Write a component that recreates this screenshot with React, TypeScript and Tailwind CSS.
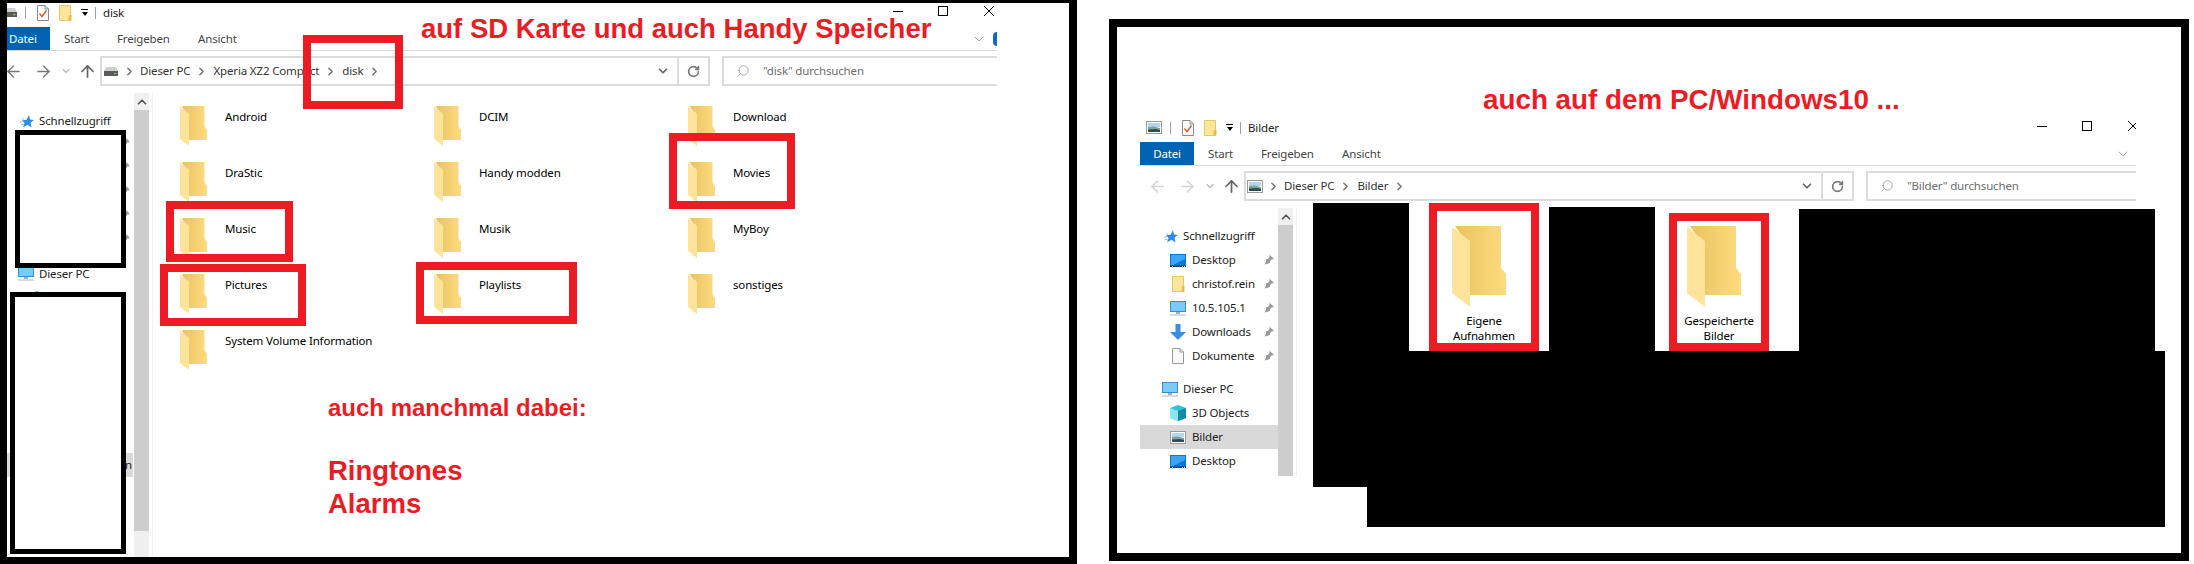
import type { ReactNode } from 'react';
import { ArrowLeft, ArrowRight, ArrowUp, ChevronDown, ChevronRight, ChevronUp, RotateCw, Search } from 'lucide-react';

const uiType = 'font-["Noto_Sans",sans-serif] text-[11.5px] tracking-[-0.15px]';
const uiFont = `${uiType} leading-none`;
const redText = 'absolute font-["Liberation_Sans",sans-serif] font-bold text-[#ed1c24] whitespace-nowrap';

function FolderIcon({ className }: { className: string }) {
  return (
    <svg className={className} viewBox="0 0 54 81" preserveAspectRatio="none">
      <defs>
        <linearGradient id="folderBack" x1="0" x2="1" y1="0" y2="0">
          <stop offset="0" stopColor="#e9c262" />
          <stop offset="1" stopColor="#fddc7e" />
        </linearGradient>
      </defs>
      <path d="M3 0H49V42L54 48V69H17V20Z" fill="url(#folderBack)" />
      <path d="M0 1L18 15V81L0 67Z" fill="#fee49b" />
    </svg>
  );
}

function TinyFolder() {
  return (
    <svg className="w-[13px] h-[16px]" viewBox="0 0 13 16">
      <path d="M.5.5H11.5V15.5H.5Z" fill="#fde69c" stroke="#e8c860" />
      <path d="M10 10H12.5V15.5H9.5Z" fill="#e9bb45" />
    </svg>
  );
}

function DocCheck() {
  return (
    <svg className="w-[12px] h-[16px]" viewBox="0 0 12 16">
      <path d="M.5.5H8L11.5 4V15.5H.5Z" fill="#fff" stroke="#8a8a8a" />
      <path d="M8 .5V4H11.5" fill="none" stroke="#8a8a8a" />
      <path d="M2.5 8.5L5 11.5L9.5 5.5" fill="none" stroke="#e2572b" strokeWidth="1.4" />
    </svg>
  );
}

function DriveIcon() {
  return (
    <svg className="w-[14px] h-[9px] shrink-0" viewBox="0 0 14 9">
      <path d="M2 0H12L14 4H0Z" fill="#cfcfcf" />
      <path d="M0 4H14V9H0Z" fill="#5a5a5a" />
      <path d="M10 6H12.5V7.2H10Z" fill="#5fd35f" />
    </svg>
  );
}

function PictureIcon() {
  return (
    <svg className="w-[16px] h-[13px] shrink-0" viewBox="0 0 16 13">
      <rect x=".5" y=".5" width="15" height="12" fill="#fff" stroke="#9a9a9a" />
      <rect x="2" y="2" width="12" height="4" fill="#b3d6f0" />
      <path d="M2 6L8 5.5L14 7V11H2Z" fill="#7fa596" />
      <path d="M2 8.5L10 8L14 9V11H2Z" fill="#2f4a55" />
    </svg>
  );
}

function MonitorIcon() {
  return (
    <svg className="w-[16px] h-[15px] shrink-0" viewBox="0 0 16 15">
      <rect x=".5" y=".5" width="15" height="10" fill="#7ccaf8" stroke="#3a8ed0" />
      <path d="M6 11H10V13H6Z" fill="#9fb0c2" />
      <path d="M0 13.5H16V14.5H0Z" fill="#a9b7c6" />
    </svg>
  );
}

function DesktopIcon() {
  return (
    <svg className="w-[16px] h-[13px]" viewBox="0 0 16 13">
      <rect width="16" height="13" fill="#0b78d8" />
      <path d="M1 1H15V5L3 11H1Z" fill="#3aa6f5" />
      <path d="M0 11.5H16V13H0Z" fill="#0f4a86" />
      <path d="M2 12H3V13H2ZM12 12H13V13H12ZM14 12H15V13H14Z" fill="#fff" />
    </svg>
  );
}

function CubeIcon() {
  return (
    <svg className="w-[16px] h-[16px] shrink-0" viewBox="0 0 16 16">
      <path d="M8 0L16 3V13L8 16L0 13V3Z" fill="#2fc3d9" />
      <path d="M0 3L8 6V16L0 13Z" fill="#8fe6ee" />
      <path d="M16 3L8 6V16L16 13Z" fill="#148ba6" />
    </svg>
  );
}

function StarIcon() {
  return (
    <svg className="w-[14px] h-[13px] shrink-0" viewBox="0 0 14 13">
      <path d="M9 0L10 4.5L14 5L10.6 7.6L11.5 12.5L7.5 9.8L3 12.5L4.6 8L2 5.2L6.6 4.8Z" fill="#2d8ce6" />
      <path d="M0 7H3M1 9.5H3.5M2 4H4" stroke="#8cc4f2" strokeWidth="1" />
    </svg>
  );
}

function DownloadIcon() {
  return (
    <svg className="w-[16px] h-[16px]" viewBox="0 0 16 16">
      <path d="M5.5 0H10.5V8H16L8 16L0 8H5.5Z" fill="#3b8ee0" />
    </svg>
  );
}

function PageIcon() {
  return (
    <svg className="w-[12px] h-[16px]" viewBox="0 0 12 16">
      <path d="M.5.5H8L11.5 4V15.5H.5Z" fill="#fafafa" stroke="#9a9a9a" />
      <path d="M8 .5V4H11.5" fill="none" stroke="#9a9a9a" />
    </svg>
  );
}

function PinIcon() {
  return (
    <svg className="w-[10px] h-[10px]" viewBox="0 0 10 10">
      <path d="M6 0L10 4L8.8 4.6L7.8 4.2L6 6.4L5.8 8L4.6 8.4L.8 9.6L2.2 5.6L1.8 4.4L3.6 4L5.6 2.2L5.4 1.2Z" fill="#9b9b9b" />
    </svg>
  );
}

function TitleBar({ icon, title, pad, iconCell, buttons }: { icon: ReactNode; title: string; pad: string; iconCell: string; buttons: string }) {
  return (
    <div className={`flex items-center h-[24px] pb-[5px] overflow-hidden ${uiFont} text-[#222] ${pad}`}>
      <div className={`flex justify-end overflow-hidden mr-[7px] ${iconCell}`}>{icon}</div>
      <div className="w-px h-[12px] bg-[#a0a0a0] ml-[1px]" />
      <div className="ml-[11px]">
        <DocCheck />
      </div>
      <div className="ml-[10px]">
        <TinyFolder />
      </div>
      <div className="ml-[9px] flex flex-col items-center w-[7px]">
        <div className="w-[7px] h-px bg-black mb-[2px]" />
        <div className="w-0 h-0 border-x-[3.5px] border-x-transparent border-t-[4px] border-t-black" />
      </div>
      <div className="w-px h-[12px] bg-[#a0a0a0] ml-[7px]" />
      <span className="ml-[7px]">{title}</span>
      <div className={`ml-auto flex items-center -mt-[3px] ${buttons}`}>
        <div className="w-[10px] h-px bg-black" />
        <div className="w-[10px] h-[10px] border border-black ml-[35px]" />
        <svg className="w-[10px] h-[10px] ml-[36px]" viewBox="0 0 10 10">
          <path d="M0 0L10 10M10 0L0 10" stroke="#000" strokeWidth="1" />
        </svg>
      </div>
    </div>
  );
}

function RibbonTabs({ datei, chevron, help }: { datei: string; chevron: string; help?: boolean }) {
  return (
    <div className={`flex items-center h-[24px] border-b border-[#dadada] ${uiFont} text-[#444]`}>
      <div className={`h-[23px] bg-[#0063b1] text-white flex items-center ${datei}`}>Datei</div>
      <span className="ml-[14px] w-[53px]">Start</span>
      <span className="w-[81px]">Freigeben</span>
      <span>Ansicht</span>
      <ChevronDown className={`ml-auto w-[16px] h-[16px] text-[#999] ${chevron}`} strokeWidth={1.3} />
      {help && <div className="w-[4px] h-[14px] bg-[#0f6cc4] rounded-l-full" />}
    </div>
  );
}

function AddressBar({ icon, crumbs, query, backColor, nav, box, search }: { icon: ReactNode; crumbs: string[]; query: string; backColor: string; nav: string; box: string; search: string }) {
  return (
    <div className={`flex items-center h-[30px] mt-[5px] ${uiFont} text-[#333]`}>
      <div className={`flex items-center shrink-0 ${nav}`}>
        <div className="w-[12px] flex justify-center">
          <ArrowLeft className={`w-[19px] h-[19px] shrink-0 ${backColor}`} strokeWidth={1.8} />
        </div>
        <div className="w-[12px] ml-[18px] flex justify-center">
          <ArrowRight className={`w-[19px] h-[19px] shrink-0 ${backColor}`} strokeWidth={1.8} />
        </div>
        <div className="w-[10px] ml-[12px] flex justify-center">
          <ChevronDown className="w-[12px] h-[12px] shrink-0 text-[#bbb]" strokeWidth={2.5} />
        </div>
        <div className="w-[12px] ml-[10px] flex justify-center">
          <ArrowUp className="w-[19px] h-[19px] shrink-0 text-[#666]" strokeWidth={2.2} />
        </div>
      </div>
      <div className={`flex items-center h-[30px] border-2 border-[#dcdcdc] shrink-0 ${box}`}>
        <div className="ml-[2px] w-[14px] flex justify-center">{icon}</div>
        <div className="w-[22px] flex justify-center">
          <ChevronRight className="w-[13px] h-[13px] shrink-0 text-[#777]" strokeWidth={3} />
        </div>
        {crumbs.map((c) => (
          <div key={c} className="flex items-center">
            <span>{c}</span>
            <div className="w-[23px] flex justify-center">
              <ChevronRight className="w-[13px] h-[13px] shrink-0 text-[#777]" strokeWidth={3} />
            </div>
          </div>
        ))}
        <ChevronDown className="ml-auto mr-[7px] w-[14px] h-[14px] text-[#666]" strokeWidth={3} />
        <div className="w-[31px] h-full border-l-2 border-[#dcdcdc] flex items-center justify-center">
          <RotateCw className="w-[13px] h-[13px] text-[#777]" strokeWidth={3} />
        </div>
      </div>
      <div className={`flex items-center h-[30px] border-y-2 border-l-2 border-[#dcdcdc] flex-1 text-[#6d6d6d] ${search}`}>
        <Search className="w-[14px] h-[14px] ml-[12px] -scale-x-100 text-[#888]" strokeWidth={1.2} />
        <span className="ml-[13px]">{query}</span>
      </div>
    </div>
  );
}

function Scrollbar({ height }: { height: string }) {
  return (
    <div className={`w-[15px] shrink-0 bg-[#f0f0f0] overflow-hidden flex flex-col ${height}`}>
      <div className="h-[17px] shrink-0 flex items-center justify-center">
        <ChevronUp className="w-[14px] h-[14px] text-[#555]" strokeWidth={3} />
      </div>
      <div className="h-[421px] shrink-0 bg-[#cdcdcd]" />
    </div>
  );
}

function NavRow({ icon, label, pin, selected }: { icon: ReactNode; label: string; pin?: boolean; selected?: boolean }) {
  return (
    <div className={`flex items-center h-[24px] pl-[30px] ${selected ? 'bg-[#d9d9d9]' : ''}`}>
      <div className="w-[16px] flex justify-center">{icon}</div>
      <span className="ml-[6px] text-[#222]">{label}</span>
      {pin && (
        <div className="ml-auto mr-[4px]">
          <PinIcon />
        </div>
      )}
    </div>
  );
}

const diskFolders = ['Android', 'DCIM', 'Download', 'DraStic', 'Handy modden', 'Movies', 'Music', 'Musik', 'MyBoy', 'Pictures', 'Playlists', 'sonstiges', 'System Volume Information'];

function DiskPanel() {
  return (
    <div className="relative w-[1077px] h-[564px] shrink-0 border-l-[7px] border-t-[3px] border-r-[8px] border-b-[7px] border-black bg-white overflow-hidden">
      <div className="w-[990px]">
        <TitleBar icon={<DriveIcon />} title="disk" pad="" iconCell="w-[10px]" buttons="mr-[3px]" />
        <RibbonTabs datei="w-[43px] pl-[2px]" chevron="mr-[6px]" help />
        <AddressBar icon={<DriveIcon />} crumbs={['Dieser PC', 'Xperia XZ2 Compact', 'disk']} query={'"disk" durchsuchen'} backColor="text-[#777]" nav="w-[93px]" box="w-[610px]" search="ml-[12px]" />
        <div className={`flex mt-[7px] h-[464px] ${uiFont}`}>
          <div className="w-[127px] shrink-0 relative">
            <div className="flex items-center pl-[13px] mt-[21px] h-[14px]">
              <StarIcon />
              <span className="ml-[5px] text-[#222]">Schnellzugriff</span>
            </div>
            <div className="mt-[3px] flex flex-col items-end pr-[4px]">
              {[0, 1, 2, 3, 4].map((i) => (
                <div key={i} className="h-[24px] flex items-center">
                  <PinIcon />
                </div>
              ))}
            </div>
            <div className="flex items-center pl-[11px] mt-[15px]">
              <MonitorIcon />
              <span className="ml-[5px] text-[#222]">Dieser PC</span>
            </div>
            <div className="pl-[22px] mt-[10px]">
              <CubeIcon />
            </div>
            <div className="absolute left-0 right-[1px] top-[360px] h-[24px] bg-[#d9d9d9] flex items-center justify-end pr-[1px] text-[#222]">n</div>
          </div>
          <Scrollbar height="h-[464px]" />
          <div className="ml-[3px] w-px h-full bg-[#f0f0f0]" />
          <div className="ml-[27px] grid grid-cols-[254px_254px_254px] auto-rows-[56px] pt-[13px]">
            {diskFolders.map((name) => (
              <div key={name} className="flex items-start">
                <FolderIcon className="w-[27px] h-[40px] shrink-0" />
                <span className="ml-[18px] mt-[5px] text-black">{name}</span>
              </div>
            ))}
          </div>
        </div>
      </div>

      {/* annotations, positions relative to the panel's padding box at (7,3) */}
      <div className="absolute left-[8px] top-[127px] w-[111px] h-[138px] border-[5px] border-black bg-white" />
      <div className="absolute left-[3px] top-[289px] w-[116px] h-[262px] border-[5px] border-black bg-white" />
      <div className="absolute left-[296px] top-[32px] w-[100px] h-[74px] border-[8px] border-[#ed1c24]" />
      <div className="absolute left-[159px] top-[198px] w-[127px] h-[61px] border-[8px] border-[#ed1c24]" />
      <div className="absolute left-[153px] top-[261px] w-[146px] h-[62px] border-[8px] border-[#ed1c24]" />
      <div className="absolute left-[409px] top-[259px] w-[161px] h-[62px] border-[8px] border-[#ed1c24]" />
      <div className="absolute left-[662px] top-[130px] w-[126px] h-[76px] border-[8px] border-[#ed1c24]" />
      <div className={`${redText} left-[414px] top-[10px] text-[27.5px] leading-[32px]`}>auf SD Karte und auch Handy Speicher</div>
      <div className={`${redText} left-[321px] top-[391px] text-[24px] leading-[28px]`}>auch manchmal dabei:</div>
      <div className={`${redText} left-[321px] top-[451px] text-[27.5px] leading-[33px]`}>
        Ringtones
        <br />
        Alarms
      </div>
    </div>
  );
}

function BilderPanel() {
  return (
    <div className="relative ml-[32px] mt-[19px] w-[1080px] h-[542px] border-[8px] border-black bg-white overflow-hidden">
      <div className="ml-[23px] mt-[91px] w-[996px]">
        <TitleBar icon={<PictureIcon />} title="Bilder" pad="pl-[6px]" iconCell="w-[16px]" buttons="-mr-[2px]" />
        <RibbonTabs datei="w-[54px] justify-center" chevron="mr-[5px]" />
        <AddressBar icon={<PictureIcon />} crumbs={['Dieser PC', 'Bilder']} query={'"Bilder" durchsuchen'} backColor="text-[#d4d4d4]" nav="w-[104px] pl-[11px]" box="w-[610px]" search="ml-[12px]" />
        <div className={`flex mt-[7px] ${uiFont}`}>
          <div className="w-[138px] shrink-0 h-[268px]">
            <div className="flex items-center pl-[24px] mt-[21px] h-[14px]">
              <StarIcon />
              <span className="ml-[5px] text-[#222]">Schnellzugriff</span>
            </div>
            <div className="mt-[5px]">
              <NavRow icon={<DesktopIcon />} label="Desktop" pin />
              <NavRow icon={<TinyFolder />} label="christof.rein" pin />
              <NavRow icon={<MonitorIcon />} label="10.5.105.1" pin />
              <NavRow icon={<DownloadIcon />} label="Downloads" pin />
              <NavRow icon={<PageIcon />} label="Dokumente" pin />
            </div>
            <div className="flex items-center h-[24px] pl-[22px] mt-[9px]">
              <MonitorIcon />
              <span className="ml-[5px] text-[#222]">Dieser PC</span>
            </div>
            <NavRow icon={<CubeIcon />} label="3D Objects" />
            <NavRow icon={<PictureIcon />} label="Bilder" selected />
            <NavRow icon={<DesktopIcon />} label="Desktop" />
          </div>
          <Scrollbar height="h-[268px]" />
          <div className="ml-[3px] w-px h-[268px] bg-[#f0f0f0]" />
        </div>
      </div>

      {/* redaction blocks drawn over the window */}
      <div className="absolute left-[196px] top-[176px] w-[96px] h-[148px] bg-black" />
      <div className="absolute left-[432px] top-[180px] w-[106px] h-[144px] bg-black" />
      <div className="absolute left-[682px] top-[182px] w-[356px] h-[142px] bg-black" />
      <div className="absolute left-[196px] top-[324px] w-[852px] h-[136px] bg-black" />
      <div className="absolute left-[250px] top-[460px] w-[798px] h-[40px] bg-black" />

      <div className="absolute left-[312px] top-[176px] w-[110px] h-[148px] border-[8px] border-[#ed1c24] flex flex-col items-center pt-[15px]">
        <FolderIcon className="w-[54px] h-[81px] shrink-0 mr-[10px]" />
        <div className={`${uiType} leading-[15px] text-black text-center mt-[6px]`}>
          Eigene
          <br />
          Aufnahmen
        </div>
      </div>
      <div className="absolute left-[552px] top-[186px] w-[100px] h-[138px] border-[8px] border-[#ed1c24] flex flex-col items-center pt-[5px]">
        <FolderIcon className="w-[54px] h-[81px] shrink-0 mr-[10px]" />
        <div className={`${uiType} leading-[15px] text-black text-center mt-[6px] whitespace-nowrap`}>
          Gespeicherte
          <br />
          Bilder
        </div>
      </div>
      <div className={`${redText} left-[366px] top-[57px] text-[27.8px] leading-[32px]`}>auch auf dem PC/Windows10 ...</div>
    </div>
  );
}

export default function App() {
  return (
    <div className="flex w-[2194px] h-[564px] bg-white overflow-hidden">
      <DiskPanel />
      <BilderPanel />
    </div>
  );
}
